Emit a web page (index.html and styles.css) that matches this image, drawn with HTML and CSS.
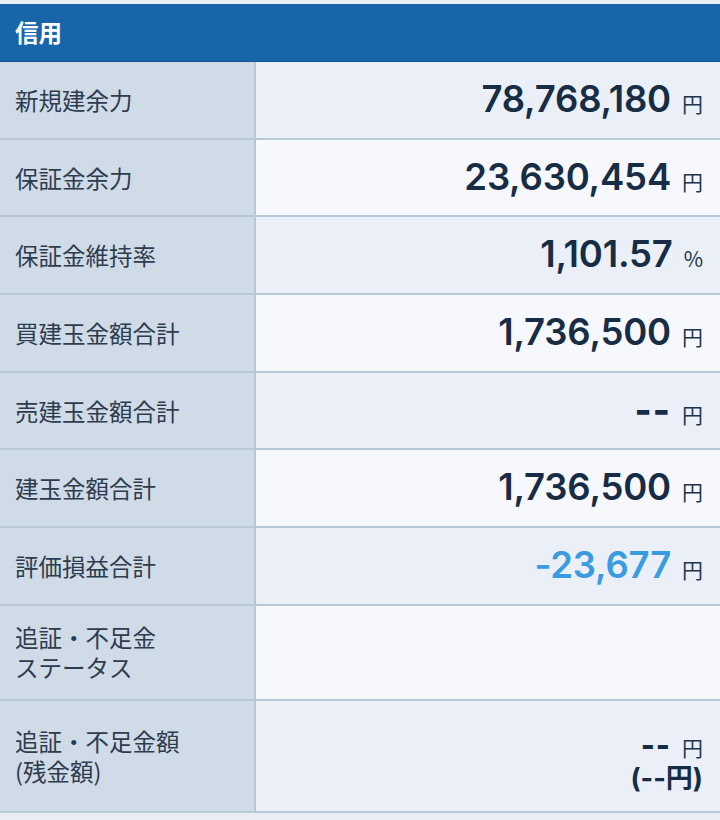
FILE: index.html
```html
<!DOCTYPE html>
<html lang="ja">
<head>
<meta charset="utf-8">
<link rel="stylesheet" href="styles.css">
</head>
<body>
<div class="page">
  <div class="header">信用</div>
  <div class="table">
    <div class="row odd"><div class="label">新規建余力</div><div class="value"><span class="num">78,768,180</span><span class="unit">円</span></div></div>
    <div class="row even"><div class="label">保証金余力</div><div class="value"><span class="num">23,630,454</span><span class="unit">円</span></div></div>
    <div class="row odd"><div class="label">保証金維持率</div><div class="value"><span class="num">1,101.57</span><span class="unit">%</span></div></div>
    <div class="row even"><div class="label">買建玉金額合計</div><div class="value"><span class="num">1,736,500</span><span class="unit">円</span></div></div>
    <div class="row odd"><div class="label">売建玉金額合計</div><div class="value"><span class="num dash">--</span><span class="unit">円</span></div></div>
    <div class="row even"><div class="label">建玉金額合計</div><div class="value"><span class="num">1,736,500</span><span class="unit">円</span></div></div>
    <div class="row odd"><div class="label">評価損益合計</div><div class="value"><span class="num neg">-23,677</span><span class="unit">円</span></div></div>
    <div class="row even tall"><div class="label">追証・不足金<br>ステータス</div><div class="value"></div></div>
    <div class="row odd taller"><div class="label">追証・不足金額<br>(残金額)</div><div class="value stack"><div class="line"><span class="num dash small">--</span><span class="unit">円</span></div><div class="sub">(--円)</div></div></div>
  </div>
</div>
</body>
</html>
```
FILE: styles.css
```css
* { box-sizing: border-box; }
html, body { margin: 0; padding: 0; }
body {
  background: #e9eef5;
  font-family: "Noto Sans CJK JP", "Noto Sans", sans-serif;
  width: 720px;
  height: 820px;
  overflow: hidden;
}
.page { padding-top: 4px; }
.header {
  height: 58px;
  background: #1865aa;
  border-bottom: 1px solid #13558f;
  color: #ffffff;
  font-weight: 700;
  font-size: 23.5px;
  line-height: 57px;
  padding-left: 15px;
}
.table { display: flex; flex-direction: column; }
.row {
  display: grid;
  grid-template-columns: 256px 1fr;
  height: 77.7px;
  border-bottom: 2px solid #b8c8d5;
}
.row.tall { height: 95px; }
.row.taller { height: 112px; }
.label {
  background: #cfdbe6;
  border-right: 2px solid #b8c8d5;
  color: #2e3c4f;
  font-size: 23.5px;
  line-height: 30px;
  padding-left: 15px;
  display: flex;
  align-items: center;
}
.row.odd .value { background: #ebf0f8; }
.row.even .value { background: #f7f8fd; }
.value {
  display: flex;
  justify-content: flex-end;
  align-items: baseline;
  padding-right: 17px;
  padding-top: 16px;
  gap: 11px;
}
.num {
  font-family: "Inter", "Roboto", sans-serif;
  font-weight: 600;
  font-size: 36.5px;
  line-height: 42px;
  color: #172c45;
  letter-spacing: -0.2px;
}
.num.neg { color: #3a9be0; }
.num.dash { font-weight: 800; letter-spacing: 1px; }
.unit {
  font-size: 21px;
  color: #22354c;
}
.value.stack {
  flex-direction: column;
  align-items: flex-end;
  justify-content: flex-start;
  gap: 0;
  padding-top: 26px;
}
.line {
  display: flex;
  align-items: baseline;
  gap: 11px;
}
.num.small { font-size: 30px; line-height: 36px; }
.sub {
  font-family: "Inter", "Noto Sans CJK JP", sans-serif;
  font-weight: 700;
  font-size: 27px;
  line-height: 32px;
  color: #172c45;
}
```
